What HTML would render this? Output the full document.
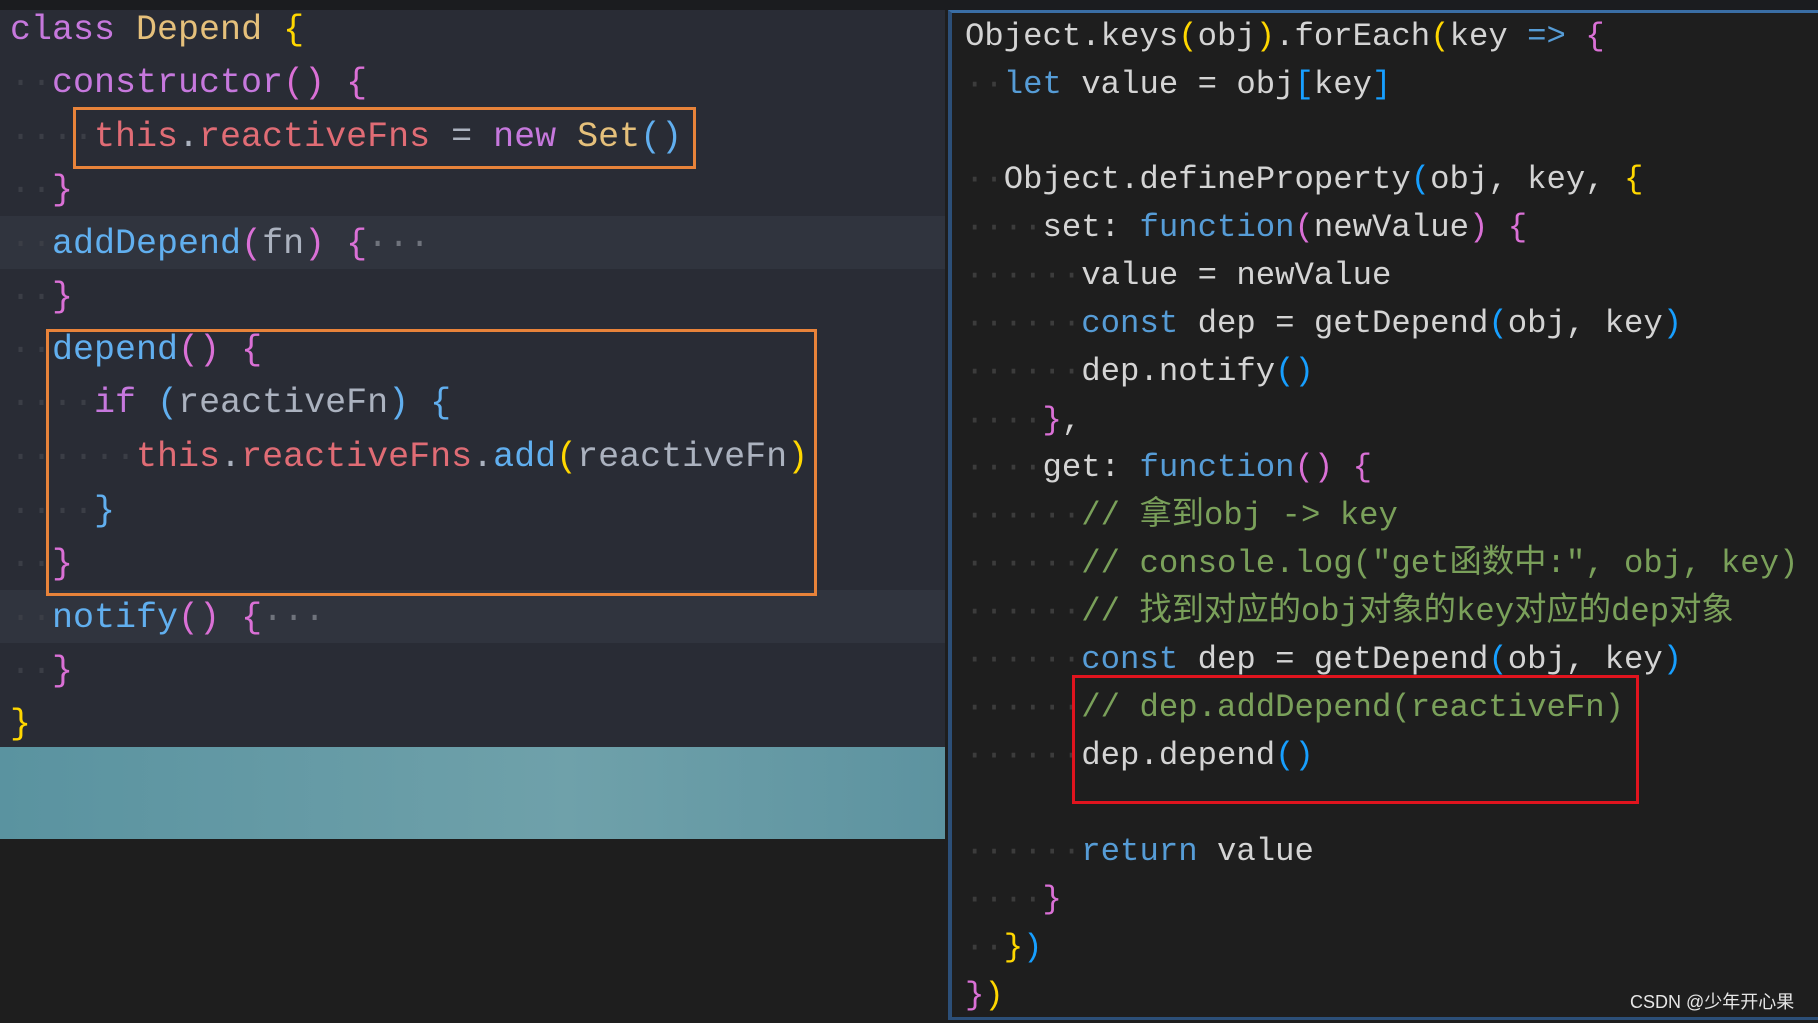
<!DOCTYPE html>
<html><head><meta charset="utf-8"><style>
*{margin:0;padding:0}
body{width:1818px;height:1023px;overflow:hidden;background:#1e1e1e;position:relative;font-family:"Liberation Mono","Noto Sans CJK SC",monospace}
#top{position:absolute;left:0;top:0;width:1818px;height:10px;background:#1b1c1f}
#left{position:absolute;left:0;top:10px;width:945px;height:737px;background:#292c35}
.hl{position:absolute;left:0;width:945px;height:53px;background:#30343e}
#teal{position:absolute;left:0;top:747px;width:945px;height:92px;background:linear-gradient(90deg,#5a93a0,#6fa1aa 60%,#5d93a0)}
#right{position:absolute;left:948px;top:10px;width:870px;height:1010px;background:#1e1e1e;border-left:4px solid #2c4f78;border-top:3px solid #3a6ea5;border-bottom:3px solid #2c4f78;box-sizing:border-box}
.l{position:absolute;white-space:pre;color:#abb2bf;font-size:35px;line-height:53px;height:53px}
.r{position:absolute;white-space:pre;color:#d4d4d4;font-size:32.3px;line-height:48px;height:48px}
.l .d{color:#3b3e46}
.r .d{color:#3c3c3c}
.p{color:#c678dd}.y{color:#e5c07b}.rd{color:#e06c75}.b{color:#61afef}.pk{color:#da70d6}.yb{color:#ffd700}.bb{color:#179fff}
.k{color:#569cd6}.c{color:#7aa05a}
.box{position:absolute;box-sizing:border-box}
</style></head><body>
<div id="top"></div>
<div id="left">
<div class="hl" style="top:206px"></div>
<div class="hl" style="top:580px"></div>
</div>
<div id="teal"></div>
<div id="right"></div>

<div class="l" style="left:10px;top:4px"><span class="p">class</span> <span class="y">Depend</span> <span class="yb">{</span></div>
<div class="l" style="left:10px;top:57px"><span class="d">··</span><span class="p">constructor</span><span class="pk">()</span> <span class="pk">{</span></div>
<div class="l" style="left:10px;top:111px"><span class="d">····</span><span class="rd">this</span>.<span class="rd">reactiveFns</span> = <span class="p">new</span> <span class="y">Set</span><span class="b">()</span></div>
<div class="l" style="left:10px;top:164px"><span class="d">··</span><span class="pk">}</span></div>
<div class="l" style="left:10px;top:218px"><span class="d">··</span><span class="b">addDepend</span><span class="pk">(</span>fn<span class="pk">)</span> <span class="pk">{</span><span style="color:#6f737c">···</span></div>
<div class="l" style="left:10px;top:271px"><span class="d">··</span><span class="pk">}</span></div>
<div class="l" style="left:10px;top:324px"><span class="d">··</span><span class="b">depend</span><span class="pk">()</span> <span class="pk">{</span></div>
<div class="l" style="left:10px;top:377px"><span class="d">····</span><span class="p">if</span> <span class="b">(</span>reactiveFn<span class="b">)</span> <span class="b">{</span></div>
<div class="l" style="left:10px;top:431px"><span class="d">······</span><span class="rd">this</span>.<span class="rd">reactiveFns</span>.<span class="b">add</span><span class="yb">(</span>reactiveFn<span class="yb">)</span></div>
<div class="l" style="left:10px;top:485px"><span class="d">····</span><span class="b">}</span></div>
<div class="l" style="left:10px;top:538px"><span class="d">··</span><span class="pk">}</span></div>
<div class="l" style="left:10px;top:592px"><span class="d">··</span><span class="b">notify</span><span class="pk">()</span> <span class="pk">{</span><span style="color:#6f737c">···</span></div>
<div class="l" style="left:10px;top:645px"><span class="d">··</span><span class="pk">}</span></div>
<div class="l" style="left:10px;top:698px"><span class="yb">}</span></div>

<div class="box" style="left:73px;top:107px;width:623px;height:62px;border:3px solid #e8833a"></div>
<div class="box" style="left:46px;top:329px;width:771px;height:267px;border:3px solid #e8833a"></div>

<div class="r" style="left:965px;top:13px">Object.keys<span class="yb">(</span>obj<span class="yb">)</span>.forEach<span class="yb">(</span>key <span class="k">=&gt;</span> <span class="pk">{</span></div>
<div class="r" style="left:965px;top:61px"><span class="d">··</span><span class="k">let</span> value = obj<span class="bb">[</span>key<span class="bb">]</span></div>
<div class="r" style="left:965px;top:156px"><span class="d">··</span>Object.defineProperty<span class="bb">(</span>obj, key, <span class="yb">{</span></div>
<div class="r" style="left:965px;top:204px"><span class="d">····</span>set: <span class="k">function</span><span class="pk">(</span>newValue<span class="pk">)</span> <span class="pk">{</span></div>
<div class="r" style="left:965px;top:252px"><span class="d">······</span>value = newValue</div>
<div class="r" style="left:965px;top:300px"><span class="d">······</span><span class="k">const</span> dep = getDepend<span class="bb">(</span>obj, key<span class="bb">)</span></div>
<div class="r" style="left:965px;top:348px"><span class="d">······</span>dep.notify<span class="bb">()</span></div>
<div class="r" style="left:965px;top:397px"><span class="d">····</span><span class="pk">}</span>,</div>
<div class="r" style="left:965px;top:444px"><span class="d">····</span>get: <span class="k">function</span><span class="pk">()</span> <span class="pk">{</span></div>
<div class="r" style="left:965px;top:492px"><span class="d">······</span><span class="c">// 拿到obj -&gt; key</span></div>
<div class="r" style="left:965px;top:540px"><span class="d">······</span><span class="c">// console.log("get函数中:", obj, key)</span></div>
<div class="r" style="left:965px;top:588px"><span class="d">······</span><span class="c">// 找到对应的obj对象的key对应的dep对象</span></div>
<div class="r" style="left:965px;top:636px"><span class="d">······</span><span class="k">const</span> dep = getDepend<span class="bb">(</span>obj, key<span class="bb">)</span></div>
<div class="r" style="left:965px;top:684px"><span class="d">······</span><span class="c">// dep.addDepend(reactiveFn)</span></div>
<div class="r" style="left:965px;top:732px"><span class="d">······</span>dep.depend<span class="bb">()</span></div>
<div class="r" style="left:965px;top:828px"><span class="d">······</span><span class="k">return</span> value</div>
<div class="r" style="left:965px;top:876px"><span class="d">····</span><span class="pk">}</span></div>
<div class="r" style="left:965px;top:924px"><span class="d">··</span><span class="yb">}</span><span class="bb">)</span></div>
<div class="r" style="left:965px;top:972px"><span class="pk">}</span><span class="yb">)</span></div>

<div class="box" style="left:1072px;top:675px;width:567px;height:129px;border:3px solid #e0141e"></div>

<div style="position:absolute;left:1630px;top:988px;font-family:'Liberation Sans','Noto Sans CJK SC',sans-serif;font-size:18px;color:#e6e6e6;white-space:nowrap">CSDN @少年开心果</div>
</body></html>
